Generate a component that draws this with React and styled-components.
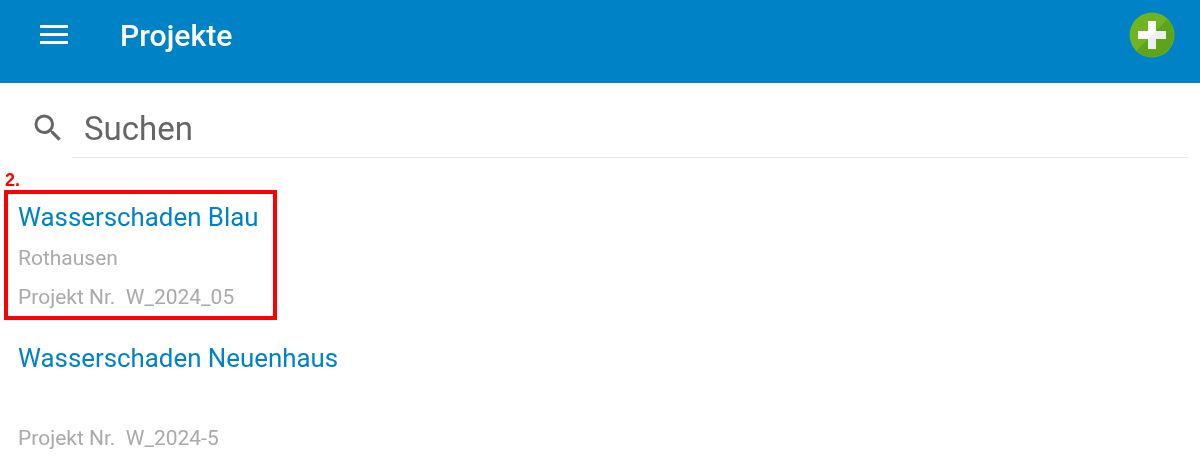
import React from 'react'
import styled, { createGlobalStyle } from 'styled-components'

const projects = [
  { id: 1, name: 'Wasserschaden Blau', place: 'Rothausen', number: 'W_2024_05', marker: '2.' },
  { id: 2, name: 'Wasserschaden Neuenhaus', place: '', number: 'W_2024-5' },
]

const GlobalStyle = createGlobalStyle`
  html, body {
    margin: 0;
    height: 100%;
    overflow: hidden;
    background: #fff;
    font-family: Roboto, 'Liberation Sans', sans-serif;
  }
`

const Page = styled.div`
  display: flex;
  flex-direction: column;
  width: 1200px;
  height: 469px;
  overflow: hidden;
  will-change: transform;
`

const Header = styled.header`
  display: flex;
  align-items: center;
  flex: none;
  height: 83px;
  padding: 0 25px 13px 40px;
  box-sizing: border-box;
  background: #0083c6;
  color: #fff;
`

const MenuButton = styled.div`
  display: flex;
  flex-direction: column;
  gap: 5px;
  width: 28px;
  margin-right: 52px;
  padding-bottom: 1px;

  span {
    display: block;
    height: 3px;
    background: #fff;
  }
`

const Title = styled.h1`
  flex: 1;
  margin: 2px 0 0;
  font-size: 30.2px;
  font-weight: 500;
  line-height: 38px;
`

const SearchRow = styled.div`
  display: flex;
  align-items: stretch;
  flex: none;
  height: 75px;
  padding: 0 12px 0 30px;
`

const SearchIcon = styled.svg`
  flex: none;
  width: 36px;
  height: 36px;
  margin: 27px 6px 0 0;
  fill: #666;
`

const SearchField = styled.div`
  flex: 1;
  padding: 25px 0 0 12px;
  border-bottom: 1px solid #e6e6e6;
  font-size: 33px;
  line-height: 42px;
  color: #666;
`

const List = styled.div`
  display: flex;
  flex-direction: column;
  padding-top: 39px;
`

const Item = styled.div`
  position: relative;
  display: flex;
  flex-direction: column;
  height: 141px;
  padding-left: 18px;
`

const Name = styled.div`
  height: 41px;
  font-size: 25.85px;
  line-height: 41px;
  color: #0083c6;
`

const Meta = styled.div`
  height: ${p => p.$height}px;
  font-size: 21px;
  line-height: ${p => p.$height}px;
  color: #aaa;
  white-space: pre;
`

const Highlight = styled.div`
  position: absolute;
  left: 4px;
  top: -7px;
  width: 273px;
  height: 130px;
  box-sizing: border-box;
  border: 4px solid #f00;
`

const Marker = styled.span`
  position: absolute;
  left: 5px;
  top: -27px;
  font-family: 'Liberation Sans', Arial, sans-serif;
  font-size: 18px;
  font-weight: 700;
  line-height: 20px;
  color: #f00;
`

const AddIcon = () => (
  <svg width="46" height="46" viewBox="0 0 46 46">
    <circle cx="23" cy="23" r="22.5" fill="#6eb521" />
    <path d="M38.9 7.1A22.5 22.5 0 0 1 7.1 38.9Z" fill="#5ea41b" />
    <path d="M19 9h8v10h10v8H27v10h-8V27H9v-8h10Z" fill="#fff" />
    <path d="M27 19h10v8H27v10h-8V27Z" fill="#eceff1" />
  </svg>
)

const App = () => (
  <Page>
    <GlobalStyle />
    <Header>
      <MenuButton>
        <span />
        <span />
        <span />
      </MenuButton>
      <Title>Projekte</Title>
      <AddIcon />
    </Header>
    <SearchRow>
      <SearchIcon viewBox="0 0 24 24">
        <path d="M15.5 14h-.79l-.28-.27A6.47 6.47 0 0 0 16 9.5 6.5 6.5 0 1 0 9.5 16c1.61 0 3.09-.59 4.23-1.57l.27.28v.79l5 4.99L20.49 19l-4.99-5zm-6 0C7.01 14 5 11.99 5 9.5S7.01 5 9.5 5 14 7.01 14 9.5 11.99 14 9.5 14z" />
      </SearchIcon>
      <SearchField>Suchen</SearchField>
    </SearchRow>
    <List>
      {projects.map(project => (
        <Item key={project.id}>
          <Name>{project.name}</Name>
          <Meta $height={40}>{project.place}</Meta>
          <Meta $height={38}>{`Projekt Nr.  ${project.number}`}</Meta>
          {project.marker && (
            <>
              <Marker>{project.marker}</Marker>
              <Highlight />
            </>
          )}
        </Item>
      ))}
    </List>
  </Page>
)

export default App
